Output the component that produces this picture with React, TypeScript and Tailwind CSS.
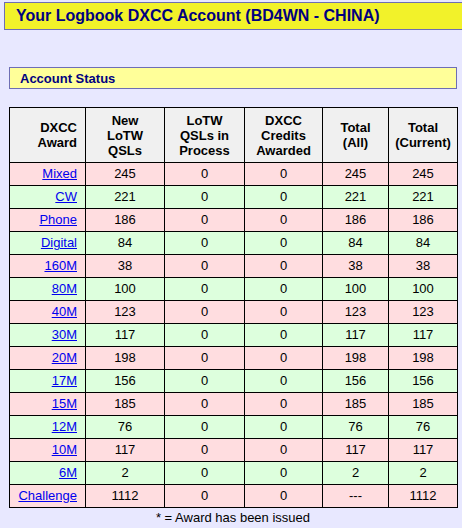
const rows = [
  ["Mixed", "245", "0", "0", "245", "245"],
  ["CW", "221", "0", "0", "221", "221"],
  ["Phone", "186", "0", "0", "186", "186"],
  ["Digital", "84", "0", "0", "84", "84"],
  ["160M", "38", "0", "0", "38", "38"],
  ["80M", "100", "0", "0", "100", "100"],
  ["40M", "123", "0", "0", "123", "123"],
  ["30M", "117", "0", "0", "117", "117"],
  ["20M", "198", "0", "0", "198", "198"],
  ["17M", "156", "0", "0", "156", "156"],
  ["15M", "185", "0", "0", "185", "185"],
  ["12M", "76", "0", "0", "76", "76"],
  ["10M", "117", "0", "0", "117", "117"],
  ["6M", "2", "0", "0", "2", "2"],
  ["Challenge", "1112", "0", "0", "---", "1112"],
]

const heads = [
  ["DXCC", "Award"],
  ["New", "LoTW", "QSLs"],
  ["LoTW", "QSLs in", "Process"],
  ["DXCC", "Credits", "Awarded"],
  ["Total", "(All)"],
  ["Total", "(Current)"],
]

const widths = ["w-[76px]", "w-[79px]", "w-[80px]", "w-[78px]", "w-[66px]", "w-[69px]"]

export default function App() {
  return (
    <div className="w-[462px] h-[528px] bg-[#e8e8ff] overflow-hidden [font-family:'Liberation_Sans',Arial,sans-serif] text-black">
      <div className="ml-[4px] mt-[2px] h-[28px] bg-[#f2f22a] border-y border-l border-[#6e6eb4] flex items-center pl-[11px]">
        <h1 className="text-[16px] font-bold text-[#000080] leading-none">Your Logbook DXCC Account (BD4WN - CHINA)</h1>
      </div>

      <div className="ml-[9px] mt-[37px] w-[448px] h-[22px] bg-[#ffff99] border border-[#6e6eb4] flex items-center pl-[10px]">
        <h2 className="text-[13px] font-bold text-[#000080] leading-none">Account Status</h2>
      </div>

      <table className="ml-[9px] mt-[18px] w-[448px] border-collapse border border-black text-[13px] table-fixed">
        <thead>
          <tr className="bg-[#f0f0f0] h-[55px]">
            {heads.map((h, i) => (
              <th
                key={i}
                className={`${widths[i]} border border-black font-bold leading-[15px] ${i === 0 ? "text-right pr-[8px]" : "text-center"}`}
              >
                {h.map((l, j) => (
                  <div key={j}>{l}</div>
                ))}
              </th>
            ))}
          </tr>
        </thead>
        <tbody>
          {rows.map((r, i) => (
            <tr key={r[0]} className={`h-[23px] ${i % 2 === 0 ? "bg-[#ffdde0]" : "bg-[#ddffdd]"}`}>
              {r.map((c, j) =>
                j === 0 ? (
                  <td key={j} className="border border-black text-right pr-[8px]">
                    <a href="#" className="text-[#0000ee] underline">{c}</a>
                  </td>
                ) : (
                  <td key={j} className="border border-black text-center">{c}</td>
                )
              )}
            </tr>
          ))}
        </tbody>
      </table>

      <p className="text-center text-[13px] leading-[15px] mt-[2px] ml-[9px] w-[448px]">* = Award has been issued</p>
    </div>
  )
}
